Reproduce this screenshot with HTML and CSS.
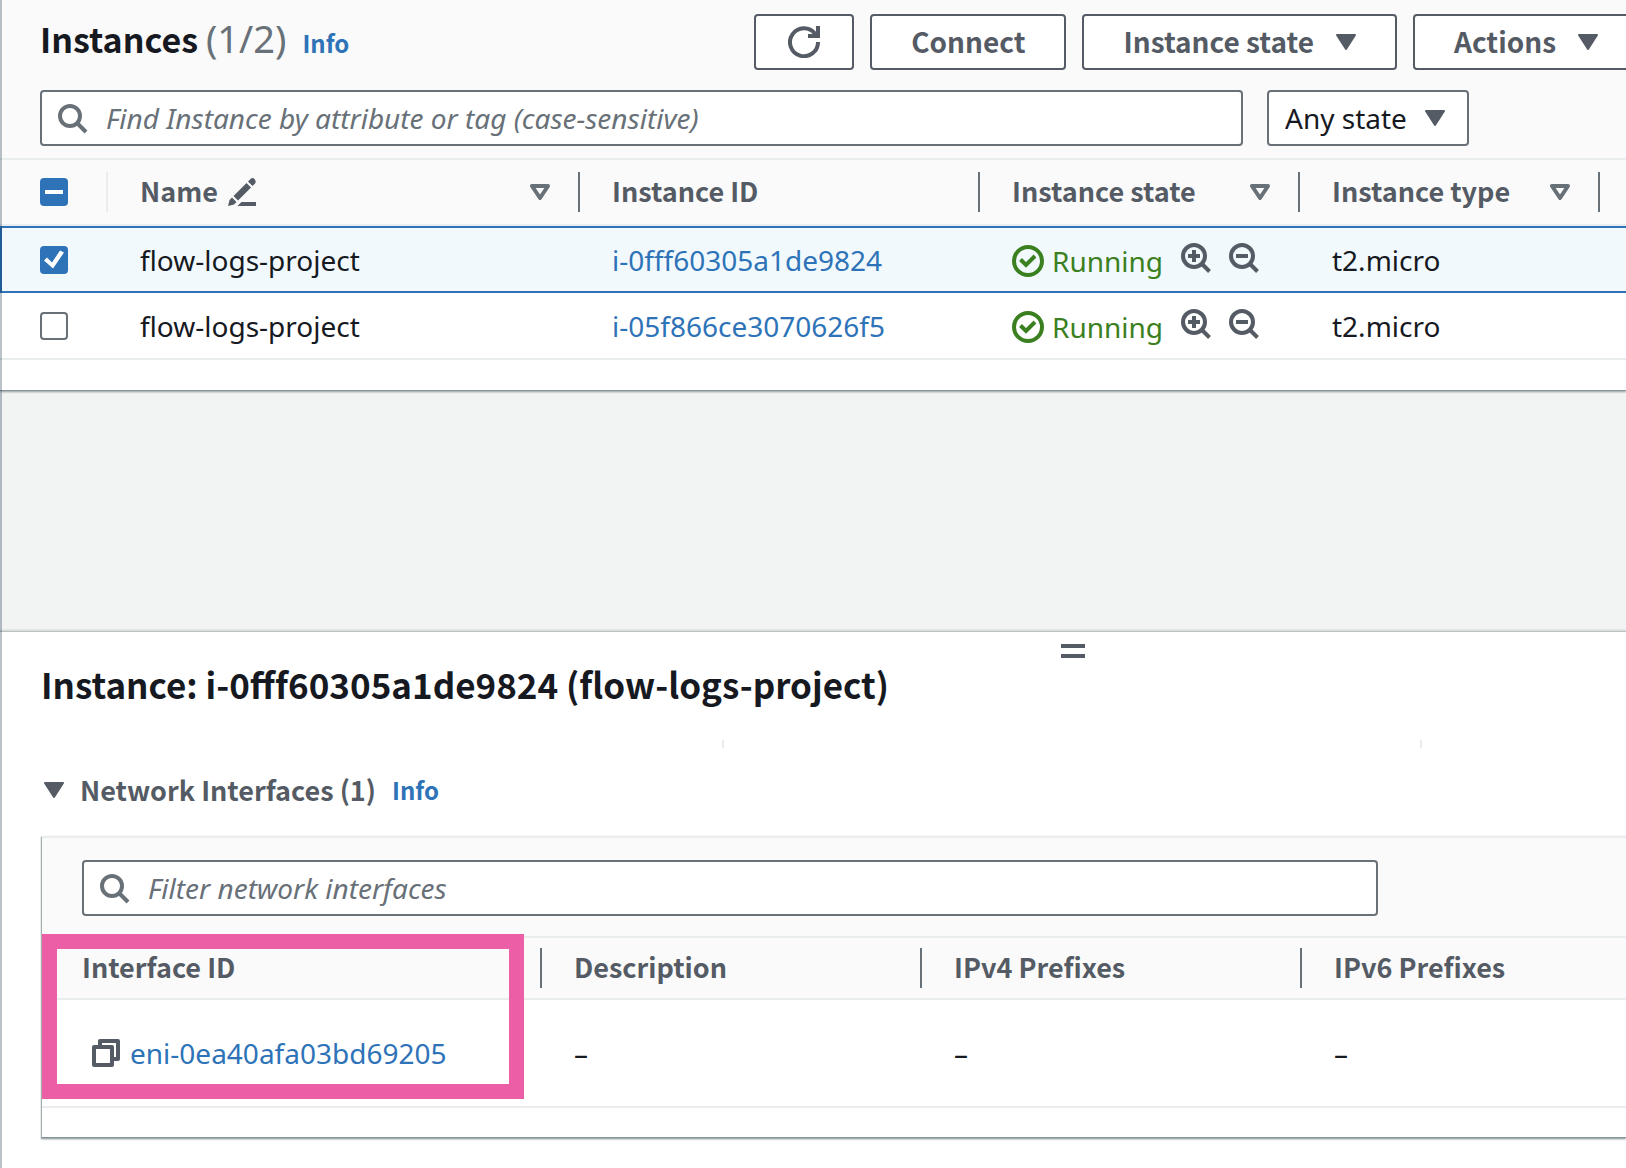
FILE: index.html
```html
<!DOCTYPE html>
<html lang="en">
<head>
<meta charset="utf-8">
<title>Instances | EC2 Management Console</title>
<link rel="stylesheet" href="styles.css">
</head>
<body>
<svg class="sprite" aria-hidden="true">
  <symbol id="i-search" viewBox="0 0 32 32"><circle cx="14" cy="14" r="10" fill="none" stroke="currentColor" stroke-width="4"/><path d="M21 21l9 9" stroke="currentColor" stroke-width="4"/></symbol>
  <symbol id="i-refresh" viewBox="0 0 32 32"><path d="M30 16a14 14 0 1 1-3-8.500" fill="none" stroke="currentColor" stroke-width="4"/><path d="M28 0h4v12H20V8h4l4-2z" fill="currentColor"/></symbol>
  <symbol id="i-caret" viewBox="0 0 20 16"><path d="M1 1h18l-9 14z" fill="currentColor" stroke="currentColor" stroke-width="2" stroke-linejoin="round"/></symbol>
  <symbol id="i-sort" viewBox="0 0 20 16"><path d="M2 2h16l-8 12z" fill="none" stroke="currentColor" stroke-width="4" stroke-linejoin="round"/></symbol>
  <symbol id="i-edit" viewBox="0 0 28 28"><path d="M0 28l1.500-6 2.500-2.500 4.500 4.500-2.500 2.500zM5.500 18L18.500 5l4.500 4.500L10 22.500zM20 3.500l3-3q2-1 3.500.5t1 4L24.500 8zM9.500 28l4-4H28v4z" fill="currentColor"/></symbol>
  <symbol id="i-ok" viewBox="0 0 32 32"><circle cx="16" cy="16" r="14" fill="none" stroke="currentColor" stroke-width="4"/><path d="M8.500 14.500L14 20l9-9" fill="none" stroke="currentColor" stroke-width="4"/></symbol>
  <symbol id="i-zoom-in" viewBox="0 0 30 30"><circle cx="13" cy="13" r="11" fill="none" stroke="currentColor" stroke-width="4"/><path d="M20.500 20.500l8 8M7 13h12M13 7v12" stroke="currentColor" stroke-width="4"/></symbol>
  <symbol id="i-zoom-out" viewBox="0 0 30 30"><circle cx="13" cy="13" r="11" fill="none" stroke="currentColor" stroke-width="4"/><path d="M20.500 20.500l8 8M7 13h12" stroke="currentColor" stroke-width="4"/></symbol>
  <symbol id="i-copy" viewBox="0 0 28 28"><path d="M2 8h18v18H2zM8 8V2h18v18h-6" fill="none" stroke="currentColor" stroke-width="4" stroke-linejoin="round"/></symbol>
</svg>

<main class="app">
  <section class="instances">
    <header class="toolbar">
      <div class="heading">
        <h1>Instances</h1>
        <span class="count">(1/2)</span>
        <a class="info" href="#">Info</a>
      </div>
      <div class="actions">
        <button class="btn" type="button" aria-label="Refresh"><svg class="icon-32"><use href="#i-refresh"/></svg></button>
        <button class="btn" type="button"><span>Connect</span></button>
        <button class="btn" type="button"><span>Instance state</span><svg class="caret"><use href="#i-caret"/></svg></button>
        <button class="btn" type="button"><span>Actions</span><svg class="caret"><use href="#i-caret"/></svg></button>
      </div>
    </header>
    <div class="filters">
      <label class="search">
        <svg class="icon-32"><use href="#i-search"/></svg>
        <input type="search" aria-label="Find instance" placeholder="Find Instance by attribute or tag (case-sensitive)">
      </label>
      <div class="select">
        <select aria-label="Instance state filter"><option>Any state</option></select>
        <svg class="caret"><use href="#i-caret"/></svg>
      </div>
    </div>
    <table class="grid instances-grid">
      <colgroup><col class="c-check"><col class="c-name"><col class="c-id"><col class="c-state"><col class="c-type"><col></colgroup>
      <thead>
        <tr>
          <th scope="col"><div class="th light"><input class="check mixed" type="checkbox" aria-label="Select all instances"></div></th>
          <th scope="col"><div class="th"><span>Name</span><svg class="edit"><use href="#i-edit"/></svg><svg class="caret sort"><use href="#i-sort"/></svg></div></th>
          <th scope="col"><div class="th"><span>Instance ID</span></div></th>
          <th scope="col"><div class="th"><span>Instance state</span><svg class="caret sort"><use href="#i-sort"/></svg></div></th>
          <th scope="col"><div class="th"><span>Instance type</span><svg class="caret sort"><use href="#i-sort"/></svg></div></th>
          <td></td>
        </tr>
      </thead>
      <tbody>
        <tr class="selected">
          <td><input class="check" type="checkbox" checked aria-label="Select i-0fff60305a1de9824"></td>
          <td>flow-logs-project</td>
          <td><a href="#">i-0fff60305a1de9824</a></td>
          <td><div class="state"><span class="running"><svg class="icon-32"><use href="#i-ok"/></svg>Running</span><span class="zooms"><button type="button" aria-label="Filter by this value"><svg class="icon-30"><use href="#i-zoom-in"/></svg></button><button type="button" aria-label="Exclude this value"><svg class="icon-30"><use href="#i-zoom-out"/></svg></button></span></div></td>
          <td>t2.micro</td>
          <td></td>
        </tr>
        <tr>
          <td><input class="check" type="checkbox" aria-label="Select i-05f866ce3070626f5"></td>
          <td>flow-logs-project</td>
          <td><a href="#">i-05f866ce3070626f5</a></td>
          <td><div class="state"><span class="running"><svg class="icon-32"><use href="#i-ok"/></svg>Running</span><span class="zooms"><button type="button" aria-label="Filter by this value"><svg class="icon-30"><use href="#i-zoom-in"/></svg></button><button type="button" aria-label="Exclude this value"><svg class="icon-30"><use href="#i-zoom-out"/></svg></button></span></div></td>
          <td>t2.micro</td>
          <td></td>
        </tr>
      </tbody>
    </table>
  </section>

  <section class="details">
    <div class="grip-row"><button class="grip" type="button" aria-label="Resize panel"></button></div>
    <h2>Instance: i-0fff60305a1de9824 (flow-logs-project)</h2>
    <div class="columns" aria-hidden="true"><i></i><i></i></div>
    <div class="section-head">
      <svg class="caret"><use href="#i-caret"/></svg>
      <h3>Network Interfaces (1)</h3>
      <a class="info" href="#">Info</a>
    </div>
    <div class="card">
      <div class="card-filter">
        <label class="search">
          <svg class="icon-32"><use href="#i-search"/></svg>
          <input type="search" aria-label="Filter interfaces" placeholder="Filter network interfaces">
        </label>
      </div>
      <div class="marked">
        <table class="grid interfaces-grid">
          <colgroup><col class="c-eni"><col class="c-prefix"><col class="c-prefix"><col></colgroup>
          <thead>
            <tr>
              <th scope="col"><div class="th"><span>Interface ID</span></div></th>
              <th scope="col"><div class="th"><span>Description</span></div></th>
              <th scope="col"><div class="th"><span>IPv4 Prefixes</span></div></th>
              <th scope="col"><div class="th last"><span>IPv6 Prefixes</span></div></th>
            </tr>
          </thead>
          <tbody>
            <tr>
              <td><div class="eni"><button type="button" aria-label="Copy interface ID"><svg class="icon-28"><use href="#i-copy"/></svg></button><a href="#">eni-0ea40afa03bd69205</a></div></td>
              <td>–</td>
              <td>–</td>
              <td>–</td>
            </tr>
          </tbody>
        </table>
        <div class="highlight"></div>
      </div>
    </div>
  </section>
</main>
</body>
</html>
```
FILE: styles.css
```css
:root {
  --ink: #16191f;
  --muted: #545b64;
  --field: #687078;
  --line: #eaeded;
  --blue: #2e73b8;
  --green: #3b8020;
  --regular: "Noto Sans", "Open Sans", sans-serif;
  --bold: "Noto Sans CJK SC", "Noto Sans", sans-serif;
}

* { box-sizing: border-box; }

body {
  margin: 0;
  font: 28px/36px var(--regular);
  color: var(--ink);
  background: #f2f3f3;
}

svg { display: block; flex: none; }
.sprite { position: absolute; width: 0; height: 0; }
.icon-32 { width: 32px; height: 32px; }
.icon-30 { width: 30px; height: 30px; }
.icon-28 { width: 28px; height: 28px; }
.caret { width: 20px; height: 16px; color: var(--muted); }

a { color: var(--blue); text-decoration: none; }
button { font: inherit; color: var(--muted); cursor: pointer; }
h1, h2, h3 { margin: 0; font-family: var(--bold); font-weight: 700; }
h1 { font-size: 34px; line-height: 48px; }
h2 { font-size: 35px; line-height: 48px; }
h3 { font-size: 27px; line-height: 36px; color: var(--muted); }
.info { font: 700 24px/36px var(--bold); }

.app {
  position: relative;
  min-height: 100vh;
  display: flex;
  flex-direction: column;
  justify-content: space-between;
  overflow: hidden;
}

/* edge of the navigation drawer */
.app::after {
  content: "";
  position: absolute;
  inset: 0 auto 0 0;
  width: 2px;
  background: rgba(0, 28, 60, .27);
  pointer-events: none;
}

.instances {
  background: #fff;
  padding-bottom: 30px;
  border-bottom: 1px solid #879596;
  box-shadow: 0 1px 2px rgba(0, 28, 36, .4);
}

.toolbar {
  display: flex;
  justify-content: space-between;
  align-items: flex-start;
  padding: 14px 0 20px 40px;
  background: #fafafa;
}
.heading { display: flex; align-items: baseline; }
.count { margin-left: 8px; font-size: 38px; line-height: 48px; color: var(--field); }
.heading .info { margin-left: 16px; }

.actions { display: flex; gap: 16px; margin-right: -13px; }
.btn {
  display: flex;
  align-items: center;
  gap: 22px;
  height: 56px;
  padding: 0 39px;
  border: 2px solid var(--muted);
  border-radius: 4px;
  background: #fff;
  font: 700 28px/36px var(--bold);
  white-space: nowrap;
}
.btn span { padding-bottom: 2px; }
.btn .icon-32 { margin: 0 -7px; }

.filters {
  display: flex;
  gap: 24px;
  padding: 0 157px 12px 40px;
  background: #fafafa;
  border-bottom: 2px solid var(--line);
}
.search {
  flex: 1;
  display: flex;
  align-items: center;
  gap: 18px;
  height: 56px;
  padding: 0 14px;
  border: 2px solid var(--field);
  border-radius: 4px;
  background: #fff;
  color: var(--field);
}
.search input {
  flex: 1;
  min-width: 0;
  padding: 0;
  border: 0;
  outline: 0;
  background: none;
  font: inherit;
  font-style: italic;
}
.search input::placeholder { color: var(--field); opacity: 1; }

.select { display: grid; align-items: center; width: 202px; }
.select > * { grid-area: 1 / 1; }
.select select {
  appearance: none;
  width: 100%;
  height: 56px;
  padding: 0 16px;
  border: 2px solid var(--field);
  border-radius: 4px;
  background: #fff;
  color: var(--ink);
  font: inherit;
}
.select .caret { justify-self: end; margin-right: 24px; pointer-events: none; }

.grid {
  width: 100%;
  table-layout: fixed;
  border-collapse: separate;
  border-spacing: 0;
}
.grid th, .grid td { padding: 0 0 0 32px; text-align: left; white-space: nowrap; }
.grid thead th, .grid thead td { background: #fafafa; border-bottom: 2px solid var(--line); }
.grid tbody td { border-bottom: 2px solid var(--line); }
.th {
  display: flex;
  align-items: center;
  height: 40px;
  padding-right: 28px;
  border-right: 2px solid var(--field);
  font: 700 27px/36px var(--bold);
  color: var(--muted);
}
.th span { padding-bottom: 2px; }
.th.light { border-color: var(--line); }
.th.last { border: 0; }
.th .sort { margin-left: auto; color: var(--field); }
.edit { width: 28px; height: 28px; margin-left: 10px; }

.c-check { width: 108px; }
.c-name { width: 472px; }
.c-id { width: 400px; }
.c-state { width: 320px; }
.c-type { width: 300px; }
.instances-grid thead th { padding-top: 12px; padding-bottom: 12px; }
.instances-grid th:first-child, .instances-grid td:first-child { padding-left: 40px; }
.instances-grid tbody td { height: 67px; }
.instances-grid .selected td {
  background: #f1f9fd;
  border-top: 2px solid var(--blue);
  border-bottom-color: var(--blue);
}
.instances-grid .selected td:first-child { border-left: 2px solid var(--blue); padding-left: 38px; }

.check {
  appearance: none;
  display: block;
  flex: none;
  width: 28px;
  height: 28px;
  margin: 0;
  border: 2px solid var(--field);
  border-radius: 4px;
  background: #fff;
}
.check:checked, .check.mixed { border: 0; background: var(--blue); }
.check.mixed::before {
  content: "";
  display: block;
  width: 18px;
  height: 4px;
  margin: 12px 5px;
  background: #fff;
}
.check:checked::before {
  content: "";
  display: block;
  width: 28px;
  height: 28px;
  background: #fff;
  clip-path: polygon(4px 15px, 7px 12px, 12px 17px, 20px 5px, 24px 7px, 13px 23px);
}

.state { display: flex; align-items: center; gap: 18px; }
.running { display: flex; align-items: center; gap: 8px; padding-top: 3px; color: var(--green); }
.zooms { display: flex; gap: 18px; padding-bottom: 3px; }
.zooms button, .eni button { padding: 0; border: 0; background: none; }

.details { background: #fff; border-top: 1px solid #b9c1c1; padding-bottom: 30px; box-shadow: 0 -1px 2px rgba(0, 28, 36, .15); }
.grip-row { display: flex; padding: 12px 0 2px 1061px; }
.grip {
  width: 24px;
  height: 14px;
  padding: 0;
  border: solid var(--muted);
  border-width: 4px 0;
  background: none;
}
.details h2 { padding-left: 41px; }
.columns { display: grid; grid-template-columns: 724fr 698fr 204fr; padding-top: 32px; }
.columns i { height: 8px; border-right: 2px solid var(--line); }
.section-head { display: flex; align-items: center; padding: 24px 0 28px 44px; }
.section-head h3 { margin-left: 16px; }
.section-head .info { margin-left: 16px; }

.card {
  margin-left: 42px;
  border-top: 2px solid var(--line);
  border-bottom: 1px solid #879596;
  box-shadow: -1px 1px 1px #a2adad, 0 1px 2px rgba(0, 28, 36, .4);
  padding-bottom: 29px;
}
.card-filter {
  display: flex;
  padding: 22px 248px 20px 40px;
  background: #fafafa;
  border-bottom: 2px solid var(--line);
}
.marked { position: relative; }
.c-eni { width: 500px; }
.c-prefix { width: 380px; }
.interfaces-grid thead th { padding-top: 10px; padding-bottom: 10px; }
.interfaces-grid th:first-child { padding-left: 40px; }
.interfaces-grid td:first-child { padding-left: 50px; }
.interfaces-grid tbody td { height: 108px; }
.eni { display: flex; align-items: center; gap: 10px; }

.highlight {
  position: absolute;
  left: 0;
  top: -4px;
  width: 482px;
  height: 165px;
  border: 15px solid #ec5fa6;
  pointer-events: none;
}
```
